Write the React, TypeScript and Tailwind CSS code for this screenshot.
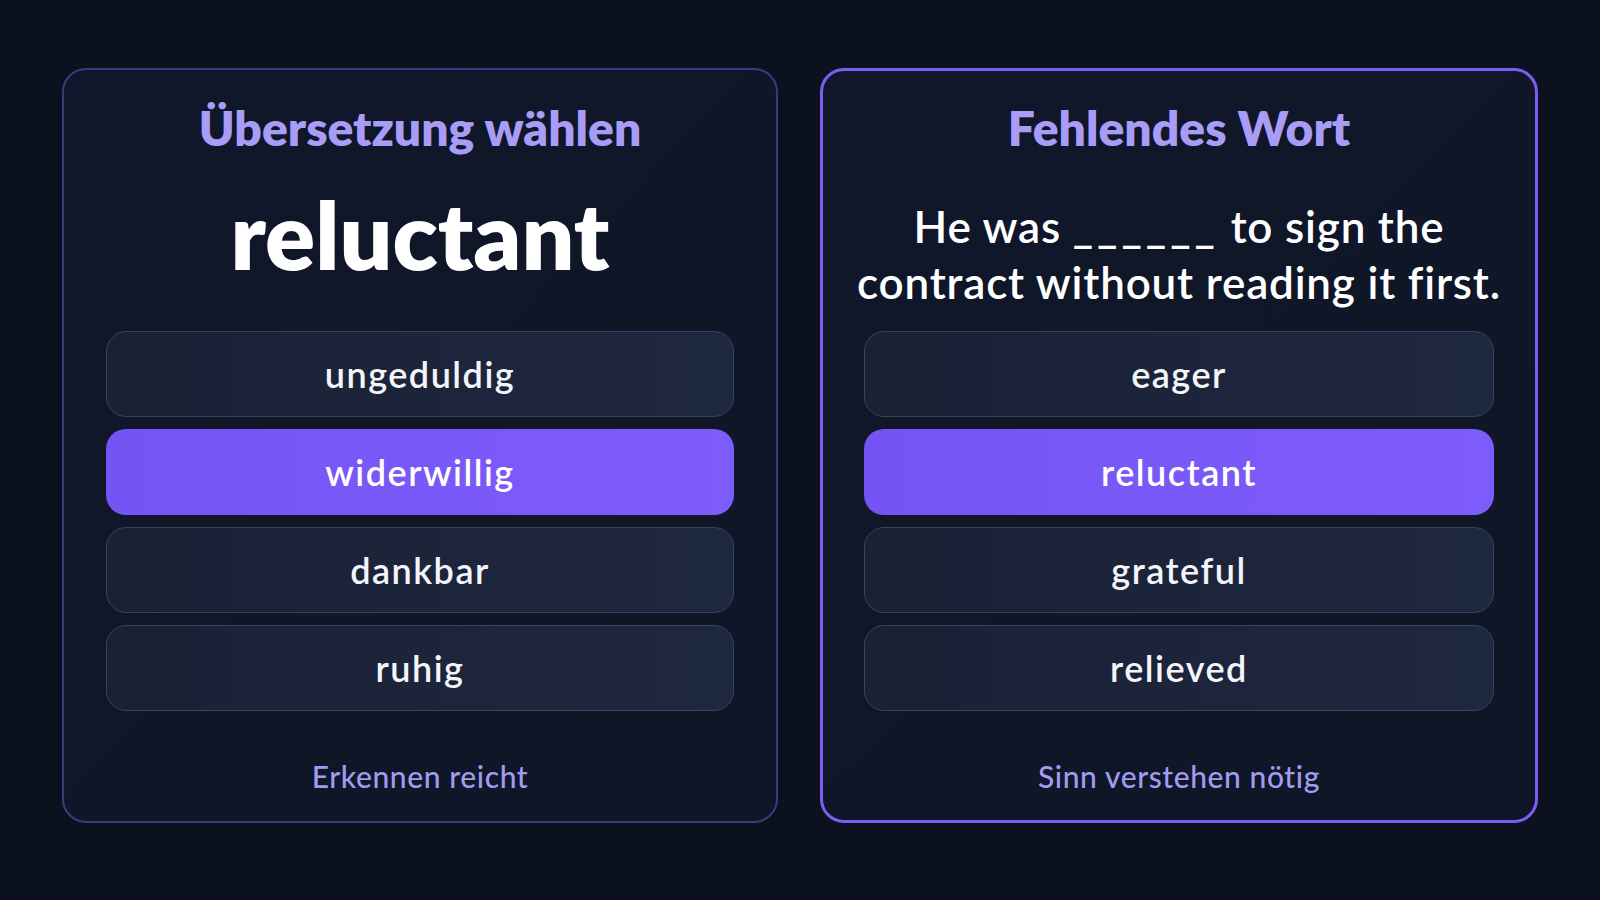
import React from "react"

type Option = { label: string; selected?: boolean }

const leftOptions: Option[] = [
  { label: "ungeduldig" },
  { label: "widerwillig", selected: true },
  { label: "dankbar" },
  { label: "ruhig" },
]

const rightOptions: Option[] = [
  { label: "eager" },
  { label: "reluctant", selected: true },
  { label: "grateful" },
  { label: "relieved" },
]

function OptionList({ options }: { options: Option[] }) {
  return (
    <div className="flex flex-col gap-[12px]">
      {options.map((o) =>
        o.selected ? (
          <div
            key={o.label}
            className="h-[86px] rounded-[20px] bg-gradient-to-r from-[#7455f4] to-[#7e5cfb] flex items-center justify-center text-[36px] tracking-[1.5px] font-semibold text-white"
          >
            {o.label}
          </div>
        ) : (
          <div
            key={o.label}
            className="h-[86px] rounded-[20px] border border-[#3b435c] bg-gradient-to-r from-[#1a2135] to-[#1f2841] flex items-center justify-center text-[36px] tracking-[1.5px] font-semibold text-[#f4f5fa]"
          >
            {o.label}
          </div>
        ),
      )}
    </div>
  )
}

function Card({
  title,
  footer,
  active,
  options,
  children,
}: {
  title: string
  footer: string
  active?: boolean
  options: Option[]
  children: React.ReactNode
}) {
  return (
    <div
      className={
        active
          ? "w-[718px] h-[755px] rounded-[24px] border-[3px] border-[#7c5cf2] bg-gradient-to-br from-[#10172a] to-[#0f1627] px-[41px] pt-[29px] flex flex-col"
          : "w-[716px] h-[755px] rounded-[24px] border-[2px] border-[#393b7b] bg-gradient-to-br from-[#10172a] to-[#0f1627] px-[42px] pt-[30px] flex flex-col"
      }
    >
      <div className="h-[56px] leading-[56px] text-center text-[48px] font-extrabold text-[#a89cf6]">
        {title}
      </div>
      <div className="h-[175px] -mx-[20px] flex items-center justify-center">{children}</div>
      <OptionList options={options} />
      <div className="mt-[45px] h-[40px] leading-[40px] text-center text-[30px] tracking-[0.6px] font-medium text-[#a49af0]">
        {footer}
      </div>
    </div>
  )
}

export default function App() {
  return (
    <div
      className="w-[1600px] h-[900px] bg-[#0c1120] flex justify-center pt-[68px] gap-[42px] text-white"
      style={{ fontFamily: "Lato, 'Noto Sans', sans-serif" }}
    >
      <Card title="Übersetzung wählen" footer="Erkennen reicht" options={leftOptions}>
        <div className="mb-[18px] text-[93px] leading-none font-extrabold text-white">reluctant</div>
      </Card>
      <Card title="Fehlendes Wort" footer="Sinn verstehen nötig" options={rightOptions} active>
        <div className="mt-[20px] whitespace-nowrap text-center text-[44px] leading-[56px] tracking-[0.8px] font-semibold text-white">
          He was <span className="tracking-[4px]">______</span> to sign the
          <br />
          contract without reading it first.
        </div>
      </Card>
    </div>
  )
}
